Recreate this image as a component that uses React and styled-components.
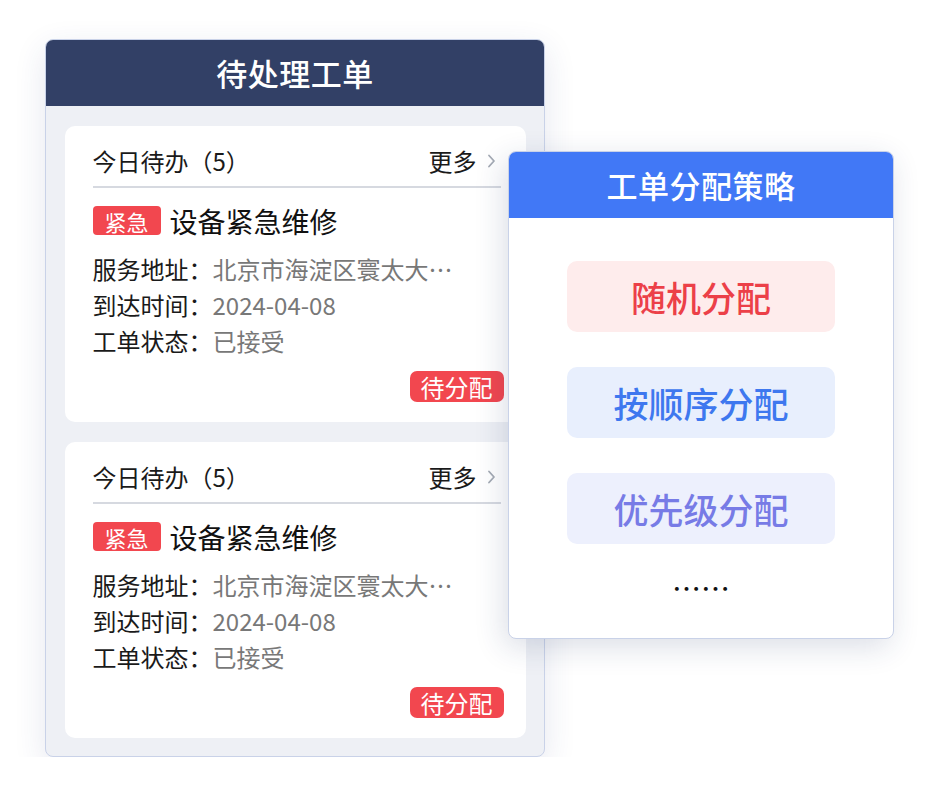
import React from 'react';
import styled, { createGlobalStyle } from 'styled-components';

const GlobalStyle = createGlobalStyle`
  body {
    margin: 0;
    background: #ffffff;
    font-family: "Noto Sans CJK SC", "Noto Sans", sans-serif;
  }
`;

const Stage = styled.div`
  display: flex;
  align-items: flex-start;
  padding: 39px 0 0 45px;
`;

const Panel = styled.section`
  box-sizing: border-box;
  width: ${p => p.$width}px;
  border: 1.5px solid #c9d2e8;
  border-radius: 8px;
  overflow: hidden;
  box-shadow: 0 10px 32px rgba(40, 60, 120, 0.12);
`;

const TaskPanel = styled(Panel)`
  background: #eef0f5;
`;

const StrategyPanel = styled(Panel)`
  position: relative;
  z-index: 1;
  margin: 112px 0 0 -37px;
  height: 488px;
  background: #ffffff;
  box-shadow: -4px 8px 30px rgba(30, 50, 100, 0.16);
`;

const PanelHeader = styled.header`
  height: 67px;
  margin: -1.5px -1.5px 0;
  display: flex;
  align-items: center;
  justify-content: center;
  background: ${p => p.$bg};
  color: #ffffff;
  font-size: 31px;
  font-weight: 500;
  letter-spacing: 0.5px;
`;

const TaskList = styled.div`
  display: flex;
  flex-direction: column;
  gap: 20px;
  padding: 20px 18.5px 18px;
`;

const Card = styled.div`
  background: #ffffff;
  border-radius: 10px;
  padding: 0 25px 20px 28px;
`;

const CardHead = styled.div`
  box-sizing: border-box;
  height: 62px;
  padding-top: 10px;
  display: flex;
  align-items: center;
  justify-content: space-between;
  border-bottom: 2px solid #d6d9e0;
  font-size: 24px;
  color: #1a1a1a;
`;

const More = styled.span`
  display: flex;
  align-items: center;
  gap: 10px;
  margin-right: 5px;
`;

const TitleRow = styled.div`
  margin-top: 16px;
  height: 34px;
  display: flex;
  align-items: center;
  gap: 9px;
  font-size: 28px;
  color: #111111;
`;

const Tag = styled.span`
  height: 29px;
  padding: 0 12px;
  display: inline-flex;
  align-items: center;
  border-radius: 4px;
  background: #f2474f;
  color: #ffffff;
  font-size: 22px;
`;

const Details = styled.div`
  margin-top: 13px;
  font-size: 24px;
  line-height: 36px;
`;

const Detail = styled.div`
  display: flex;
  color: #1a1a1a;
  white-space: nowrap;

  span {
    color: #787878;
  }
`;

const Footer = styled.div`
  margin-top: 12px;
  display: flex;
  justify-content: flex-end;
  margin-right: -3px;
`;

const Badge = styled.span`
  height: 31px;
  padding: 0 11px;
  display: inline-flex;
  align-items: center;
  border-radius: 7px;
  background: #f2474f;
  color: #ffffff;
  font-size: 24px;
`;

const StrategyBody = styled.div`
  display: flex;
  flex-direction: column;
  align-items: center;
  gap: 35px;
  padding-top: 43px;
`;

const StrategyButton = styled.div`
  width: 268px;
  height: 71px;
  display: flex;
  align-items: center;
  justify-content: center;
  border-radius: 10px;
  background: ${p => p.$bg};
  color: ${p => p.$color};
  font-size: 35px;
  font-weight: 500;
`;

const Dots = styled.div`
  margin-top: -12px;
  font-size: 29px;
  line-height: 40px;
  color: #111111;
`;

const Chevron = () => (
  <svg width="9" height="16" viewBox="0 0 9 16">
    <path d="M2 2.5l5 5.5-5 5.5" fill="none" stroke="#a4aab4" strokeWidth="1.8" strokeLinecap="round" strokeLinejoin="round" />
  </svg>
);

const TaskCard = () => (
  <Card>
    <CardHead>
      <span>今日待办（5）</span>
      <More>
        更多
        <Chevron />
      </More>
    </CardHead>
    <TitleRow>
      <Tag>紧急</Tag>
      设备紧急维修
    </TitleRow>
    <Details>
      <Detail>服务地址：<span>北京市海淀区寰太大…</span></Detail>
      <Detail>到达时间：<span>2024-04-08</span></Detail>
      <Detail>工单状态：<span>已接受</span></Detail>
    </Details>
    <Footer>
      <Badge>待分配</Badge>
    </Footer>
  </Card>
);

const strategies = [
  { label: '随机分配', bg: '#feecec', color: '#ec4048' },
  { label: '按顺序分配', bg: '#e8effd', color: '#3e78ef' },
  { label: '优先级分配', bg: '#edf0fd', color: '#777be6' },
];

const App = () => {
  return (
    <>
      <GlobalStyle />
      <Stage>
        <TaskPanel $width={500}>
          <PanelHeader $bg="#324066">待处理工单</PanelHeader>
          <TaskList>
            <TaskCard />
            <TaskCard />
          </TaskList>
        </TaskPanel>
        <StrategyPanel $width={386}>
          <PanelHeader $bg="#4178f6">工单分配策略</PanelHeader>
          <StrategyBody>
            {strategies.map(s => (
              <StrategyButton key={s.label} $bg={s.bg} $color={s.color}>
                {s.label}
              </StrategyButton>
            ))}
            <Dots>……</Dots>
          </StrategyBody>
        </StrategyPanel>
      </Stage>
    </>
  );
};

export default App;
